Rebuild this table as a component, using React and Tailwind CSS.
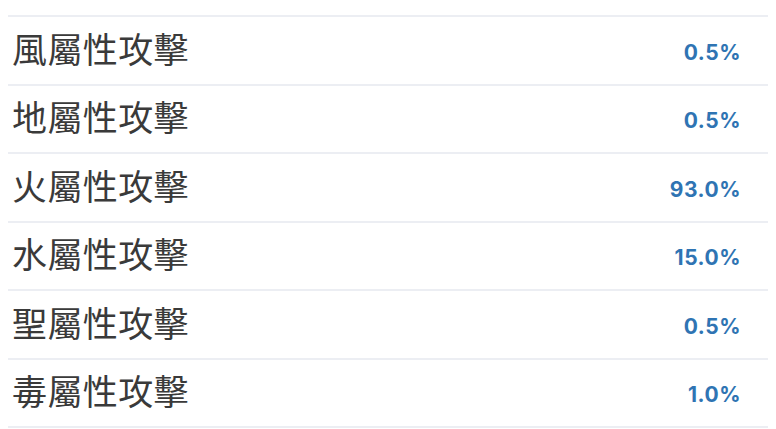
const rows = [
  { label: "風屬性攻擊", value: "0.5%" },
  { label: "地屬性攻擊", value: "0.5%" },
  { label: "火屬性攻擊", value: "93.0%" },
  { label: "水屬性攻擊", value: "15.0%" },
  { label: "聖屬性攻擊", value: "0.5%" },
  { label: "毒屬性攻擊", value: "1.0%" },
];

export default function App() {
  return (
    <div className="w-[776px] h-[429px] overflow-hidden bg-white">
      <div className="h-[15px]" />
      <div className="mx-2 w-[760px] border-t-2 border-[#eceef3]">
        {rows.map((r) => (
          <div
            key={r.label}
            className="flex h-[68.5px] items-center justify-between border-b-2 border-[#eceef3] pl-1 pr-[27px]"
          >
            <span
              className="mb-[6px] text-[35px] leading-none tracking-[0.4px] text-[#3a3a3a]"
              style={{ fontFamily: '"Noto Sans CJK TC", "Noto Sans", sans-serif' }}
            >
              {r.label}
            </span>
            <span
              className="mt-[4px] text-[21px] font-bold leading-none tracking-[0.5px] text-[#2f74b3]"
              style={{ fontFamily: 'Inter, "Open Sans", sans-serif' }}
            >
              {r.value}
            </span>
          </div>
        ))}
      </div>
    </div>
  );
}
